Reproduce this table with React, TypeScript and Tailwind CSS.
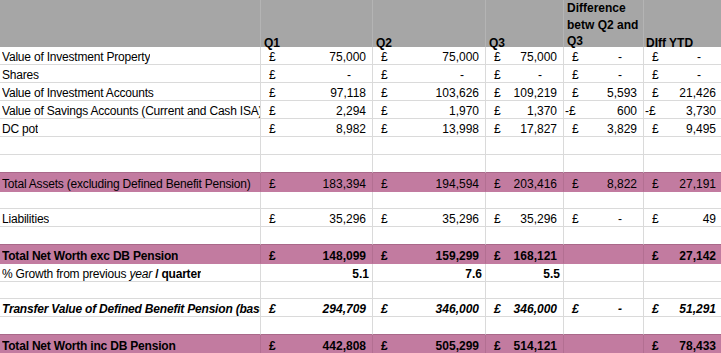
import React from "react";

type Kind = "normal" | "pink" | "italic";
type Row = {
  label?: React.ReactNode;
  vals?: (string | null)[];
  pct?: string[];
  kind?: Kind;
  bold?: boolean;
  h: number;
};

const rows: Row[] = [
  { label: "Value of Investment Property", vals: ["75,000", "75,000", "75,000", "-", "-"], h: 18 },
  { label: "Shares", vals: ["-", "-", "-", "-", "-"], h: 18 },
  { label: "Value of Investment Accounts", vals: ["97,118", "103,626", "109,219", "5,593", "21,426"], h: 18 },
  { label: "Value of Savings Accounts (Current and Cash ISA)", vals: ["2,294", "1,970", "1,370", "n600", "n3,730"], h: 18 },
  { label: "DC pot", vals: ["8,982", "13,998", "17,827", "3,829", "9,495"], h: 18 },
  { h: 18 },
  { h: 18 },
  { label: "Total Assets (excluding Defined Benefit Pension)", vals: ["183,394", "194,594", "203,416", "8,822", "27,191"], kind: "pink", h: 19 },
  { h: 17 },
  { label: "Liabilities", vals: ["35,296", "35,296", "35,296", "-", "49"], h: 18 },
  { h: 18 },
  { label: "Total Net Worth exc DB Pension", vals: ["148,099", "159,299", "168,121", null, "27,142"], kind: "pink", bold: true, h: 19 },
  {
    label: (
      <span>
        % Growth from previous <span className="italic">year</span> <span className="font-bold">/ quarter</span>
      </span>
    ),
    pct: ["5.1", "7.6", "5.5"],
    h: 18,
  },
  { h: 17 },
  { label: "Transfer Value of Defined Benefit Pension (base", vals: ["294,709", "346,000", "346,000", "-", "51,291"], kind: "italic", bold: true, h: 18 },
  { h: 18 },
  { label: "Total Net Worth inc DB Pension", vals: ["442,808", "505,299", "514,121", null, "78,433"], kind: "pink", bold: true, h: 19 },
];

const cols = "grid grid-cols-[261px_112px_113px_78px_80px_78px]";

function Money({ v }: { v: string | null }) {
  if (v === null) return null;
  const neg = v.startsWith("n");
  const val = neg ? v.slice(1) : v;
  return (
    <div className="flex w-full items-end justify-between pr-[6px]">
      <span className={neg ? "pl-[1px]" : "pl-[8px]"}>{neg ? "-£" : "£"}</span>
      <span className={val === "-" ? "mr-[15px]" : ""}>{val}</span>
    </div>
  );
}

export default function App() {
  return (
    <div className="w-[721px] h-[353px] overflow-hidden bg-white text-black font-['Liberation_Sans',Arial,sans-serif] text-[12px] leading-[14px]">
      {/* header */}
      <div className={`${cols} h-[47px] bg-[#a6a6a6] font-bold`}>
        <div className="border-r border-[#b4b4b4]" />
        <div className="flex items-end border-r border-[#b4b4b4] pl-[3px] pb-[1px]">Q1</div>
        <div className="flex items-end border-r border-[#b4b4b4] pl-[3px] pb-[1px]">Q2</div>
        <div className="flex items-end border-r border-[#b4b4b4] pl-[3px] pb-[1px]">Q3</div>
        <div className="flex items-end border-r border-[#b4b4b4] pl-[3px] pb-[1px] leading-[16.5px]">
          <div>
            Difference
            <br />
            betw Q2 and
            <br />
            Q3
          </div>
        </div>
        <div className="flex items-end pl-[2px] pb-[1px]">DIff YTD</div>
      </div>
      {rows.map((r, i) => {
        const pink = r.kind === "pink";
        const nextPink = rows[i + 1]?.kind === "pink";
        const bb = nextPink ? "border-b-[#a9698a]" : pink ? "border-b-[#c27ba0]" : "border-b-[#dadada]";
        const br = pink ? "border-r-[#b36f92]" : "border-r-[#dadada]";
        const cell = `flex items-end border-b border-r ${bb} ${br} overflow-hidden whitespace-nowrap`;
        const rowCls = [
          cols,
          pink ? "bg-[#c27ba0]" : "",
          r.bold ? "font-bold" : "",
          r.kind === "italic" ? "italic" : "",
        ].join(" ");
        return (
          <div key={i} className={rowCls} style={{ height: r.h }}>
            <div className={`${cell} pl-[2px]`}>
              <span className="block overflow-hidden tracking-[-0.2px]">{r.label}</span>
            </div>
            {[0, 1, 2, 3, 4].map((c) => (
              <div key={c} className={`${cell} ${c === 4 ? "border-r-0" : ""}`}>
                {r.vals ? (
                  <Money v={r.vals[c]} />
                ) : r.pct && r.pct[c] ? (
                  <div className="w-full text-right pr-[3px] font-bold">{r.pct[c]}</div>
                ) : null}
              </div>
            ))}
          </div>
        );
      })}
    </div>
  );
}
